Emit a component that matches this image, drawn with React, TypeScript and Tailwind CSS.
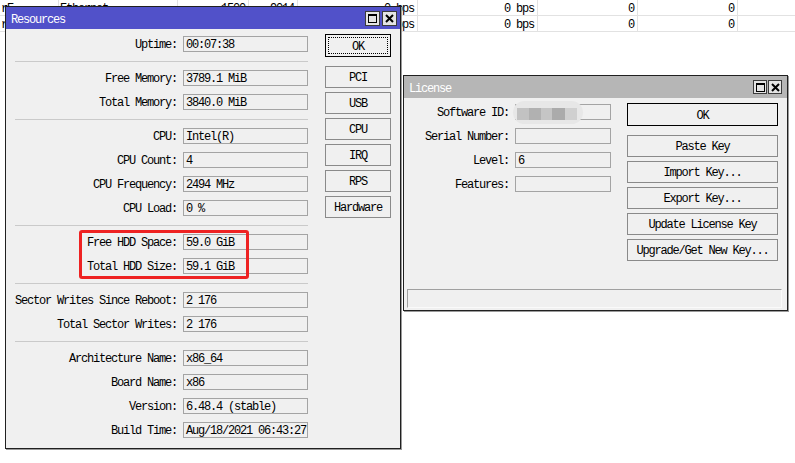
import React from "react";

type Row = { label: string; value: string };

const resourceGroups: Row[][] = [
  [{ label: "Uptime:", value: "00:07:38" }],
  [
    { label: "Free Memory:", value: "3789.1 MiB" },
    { label: "Total Memory:", value: "3840.0 MiB" },
  ],
  [
    { label: "CPU:", value: "Intel(R)" },
    { label: "CPU Count:", value: "4" },
    { label: "CPU Frequency:", value: "2494 MHz" },
    { label: "CPU Load:", value: "0 %" },
  ],
  [
    { label: "Free HDD Space:", value: "59.0 GiB" },
    { label: "Total HDD Size:", value: "59.1 GiB" },
  ],
  [
    { label: "Sector Writes Since Reboot:", value: "2 176" },
    { label: "Total Sector Writes:", value: "2 176" },
  ],
  [
    { label: "Architecture Name:", value: "x86_64" },
    { label: "Board Name:", value: "x86" },
    { label: "Version:", value: "6.48.4 (stable)" },
    { label: "Build Time:", value: "Aug/18/2021 06:43:27" },
  ],
];

const cols = [59, 119, 71, 49, 120, 120, 100, 100];
// second row is mostly hidden under the Resources window
const tableRows = [
  ["rE", "Ethernet", "1500", "9014", "0 bps", "0 bps", "0", "0"],
  ["r", "", "", "", "0 bps", "0 bps", "0", "0"],
];

function TitleButtons({ size }: { size: "lg" | "sm" }) {
  const box =
    size === "lg"
      ? "w-[15px] h-[15px] border border-[#3c3c3c] bg-[#e4e4e4] flex items-center justify-center"
      : "w-[14px] h-[14px] border border-[#3c3c3c] bg-[#e4e4e4] flex items-center justify-center";
  return (
    <div className={size === "lg" ? "flex gap-[2px]" : "flex gap-[1px]"}>
      <div className={box}>
        <div className="w-[9px] h-[9px] border border-black border-t-2" />
      </div>
      <div className={box}>
        <svg width="9" height="9" viewBox="0 0 9 9">
          <path d="M1 1L8 8M8 1L1 8" stroke="#000" strokeWidth="2" />
        </svg>
      </div>
    </div>
  );
}

function Field({ value, width }: { value: string; width: string }) {
  return (
    <div
      className={`${width} h-[16px] border border-[#a4a4a4] bg-[#f0f0f0] pl-[2px] pt-[2px] flex items-center leading-none whitespace-nowrap overflow-hidden`}
    >
      {value}
    </div>
  );
}

function Button({ label, width, focus }: { label: string; width: string; focus?: boolean }) {
  if (focus) {
    return (
      <div className={`${width} h-[23px] border border-black bg-[#f0f0f0] p-[2px]`}>
        <div className="w-full h-full border border-dotted border-black pt-[2px] flex items-center justify-center leading-none">
          {label}
        </div>
      </div>
    );
  }
  return (
    <div
      className={`${width} h-[22px] border border-[#8a8a8a] bg-[#f0f0f0] pt-[2px] flex items-center justify-center leading-none whitespace-nowrap`}
    >
      {label}
    </div>
  );
}

function ResourcesWindow() {
  return (
    <div className="absolute left-[5px] top-[6px] w-[396px] h-[443px] border border-[#202020] bg-[#f0f0f0] shadow-[1px_1px_0_#9a9a9a] flex flex-col">
      <div className="h-[22px] bg-[#5151c9] flex items-center justify-between pl-[5px] pr-[3px]">
        <span className="text-white pt-[3px] leading-none">Resources</span>
        <TitleButtons size="lg" />
      </div>
      <div className="flex">
        <div className="pt-[7px] flex flex-col">
          {resourceGroups.map((group, gi) => (
            <div key={gi} className="flex flex-col">
              {gi > 0 && <div className="ml-[9px] w-[293px] h-px bg-[#cacaca] mt-[9px] mb-[8px]" />}
              <div className="flex flex-col gap-[8px]">
                {group.map((r) => (
                  <div key={r.label} className="flex items-center h-[16px]">
                    <div className="w-[171px] text-right whitespace-nowrap leading-none pt-[2px]">{r.label}</div>
                    <div className="ml-[6px]">
                      <Field value={r.value} width="w-[125px]" />
                    </div>
                  </div>
                ))}
              </div>
            </div>
          ))}
        </div>
        <div className="ml-[17px] pt-[5px] flex flex-col">
          <Button label="OK" width="w-[66px]" focus />
          <div className="mt-[9px] flex flex-col gap-[4px]">
            {["PCI", "USB", "CPU", "IRQ", "RPS", "Hardware"].map((b) => (
              <Button key={b} label={b} width="w-[66px]" />
            ))}
          </div>
        </div>
      </div>
    </div>
  );
}

function LicenseWindow() {
  const rows = [
    { label: "Software ID:", value: "" },
    { label: "Serial Number:", value: "" },
    { label: "Level:", value: "6" },
    { label: "Features:", value: "" },
  ];
  return (
    <div className="absolute left-[403px] top-[75px] w-[385px] h-[236px] border border-[#202020] bg-[#f0f0f0] shadow-[1px_1px_0_#9a9a9a] flex flex-col">
      <div className="h-[22px] bg-[#b6b6b6] flex items-center justify-between pl-[5px] pr-[5px]">
        <span className="text-white pt-[3px] leading-none">License</span>
        <TitleButtons size="sm" />
      </div>
      <div className="flex flex-1">
        <div className="pt-[6px] flex flex-col gap-[8px]">
          {rows.map((r, i) => (
            <div key={r.label} className="flex items-center h-[16px]">
              <div className="w-[105px] text-right whitespace-nowrap leading-none pt-[2px]">{r.label}</div>
              <div className="ml-[6px] relative">
                <Field value={r.value} width="w-[96px]" />
                {i === 0 && (
                  <div className="absolute left-[-2px] top-[-3px] w-[70px] h-[23px] rounded-full bg-[#e7e7e7] flex items-center pl-[4px]">
                    <div className="flex h-[12px] mt-[2px]">
                      <div className="w-[12px] bg-[#c2c2c2]" />
                      <div className="w-[12px] bg-[#b1b1b1]" />
                      <div className="w-[11px] bg-[#c5c5c5]" />
                      <div className="w-[13px] bg-[#ababab]" />
                      <div className="w-[12px] bg-[#d0d0d0]" />
                    </div>
                  </div>
                )}
              </div>
            </div>
          ))}
        </div>
        <div className="ml-[16px] pt-[5px] flex flex-col">
          <div className="w-[151px] h-[23px] border border-black bg-[#f0f0f0] pt-[2px] flex items-center justify-center leading-none">
            OK
          </div>
          <div className="mt-[9px] flex flex-col gap-[4px]">
            {["Paste Key", "Import Key...", "Export Key...", "Update License Key", "Upgrade/Get New Key..."].map(
              (b) => (
                <Button key={b} label={b} width="w-[151px]" />
              )
            )}
          </div>
        </div>
      </div>
      <div className="ml-[3px] mb-[2px] w-[375px] h-[19px] border-t border-l border-[#a0a0a0] border-b border-r border-b-[#fafafa] border-r-[#fafafa]" />
    </div>
  );
}

function BackgroundTable() {
  return (
    <div className="flex flex-col">
      {tableRows.map((row, ri) => (
        <div key={ri} className="flex h-[16px] border-b border-[#e2e2e2]">
          {row.map((cell, ci) => (
            <div
              key={ci}
              style={{ width: cols[ci] }}
              className={`border-r border-[#e2e2e2] pt-[3px] flex items-center leading-none whitespace-nowrap overflow-hidden ${
                ci < 2 ? "justify-start pl-[1px]" : "justify-end pr-[3px]"
              }`}
            >
              {cell}
            </div>
          ))}
          <div className="flex-1" />
        </div>
      ))}
    </div>
  );
}

export default function App() {
  return (
    <div className="relative w-[795px] h-[463px] overflow-hidden bg-white text-black font-['Liberation_Mono',monospace] text-[12px] tracking-[-1.2px]">
      <BackgroundTable />
      <ResourcesWindow />
      <LicenseWindow />
      <div className="absolute left-[79px] top-[230px] w-[170px] h-[49px] border-[3px] border-[#ee2222] rounded-[3px]" />
    </div>
  );
}
